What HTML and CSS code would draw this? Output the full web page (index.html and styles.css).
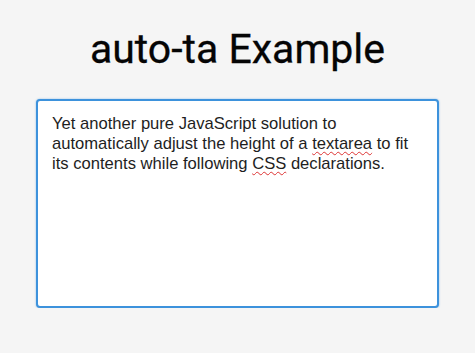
FILE: index.html
```html
<!DOCTYPE html>
<html>
<head>
<meta charset="utf-8">
<title>auto-ta Example</title>
<link rel="stylesheet" href="styles.css">
</head>
<body>
<h1 class="title">auto-ta Example</h1>

<div class="editor" contenteditable="true" spellcheck="false">Yet another pure JavaScript solution to automatically adjust the height of a <span class="typo">textarea</span> to fit its contents while following <span class="typo">CSS</span> declarations.</div>
</body>
</html>
```

FILE: styles.css
```css
body {
   margin: 0;
   padding: 24px 0 0;
   background-color: #f5f5f5;
   font-family: "Liberation Sans", Arial, sans-serif;
}

.title {
   margin: 0 0 25px;
   font-family: Roboto, "Noto Sans", sans-serif;
   font-weight: 400;
   font-size: 41px;
   line-height: 50px;
   text-align: center;
   color: #050505;
   -webkit-text-stroke: 0.3px #050505;
}

.editor {
   box-sizing: border-box;
   width: 403px;
   height: 209px;
   margin: 0 auto;
   padding: 13px 16px 13px 14px;
   background-color: #fff;
   border: 2px solid #3d92dc;
   border-radius: 4px;
   box-shadow: 0 0 2px rgba(61, 146, 220, 0.6);
   font-size: 16.6px;
   line-height: 20px;
   color: #1e1e1e;
   outline: none;
}

.typo {
   text-decoration: underline wavy #d33;
   text-decoration-thickness: 1px;
   text-underline-offset: 2px;
}
```
